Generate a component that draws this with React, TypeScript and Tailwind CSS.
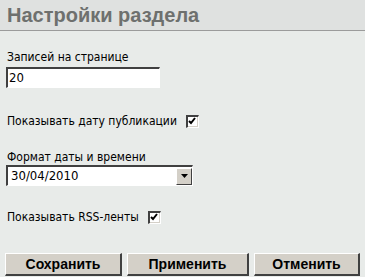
import React from "react";

const Check = () => (
  <span className="inline-flex w-[13px] h-[13px] bg-white border-t-2 border-l-2 border-t-[#404040] border-l-[#404040] border-b border-r border-b-[#ffffff] border-r-[#ffffff] shadow-[inset_-1px_-1px_0_#d4d0c8] items-center justify-center">
    <svg width="9" height="9" viewBox="0 0 9 9">
      <path d="M1 4 L3 6 L7 1" stroke="#000" strokeWidth="2" fill="none" />
    </svg>
  </span>
);

export default function App() {
  const font = { fontFamily: "Tahoma, 'DejaVu Sans Condensed', 'DejaVu Sans', sans-serif" };
  return (
    <div className="w-[365px] h-[277px] bg-[#e8ebe9] overflow-hidden" style={font}>
      <div className="h-[31px] bg-[#dfe1e0] border-b border-[#9b9b9b] pl-[7px] flex items-center">
        <span className="text-[20px] font-bold text-[#6e706e] leading-none" style={{ fontFamily: "'Liberation Sans', Arial, sans-serif" }}>
          Настройки раздела
        </span>
      </div>
      <div className="pl-[6px] pt-[19px] text-[12px] text-black">
        <div className="pl-[1px] leading-[14px]">Записей на странице</div>
        <div className="mt-[3px] w-[154px] h-[21px] bg-white border-t-2 border-l-2 border-t-[#404040] border-l-[#404040] border-b border-r border-b-white border-r-white flex items-center pl-[1px] text-[13px]">
          20
        </div>
        <div className="mt-[26px] flex items-center gap-[9px] pl-[1px] h-[14px]">
          <span>Показывать дату публикации</span>
          <Check />
        </div>
        <div className="mt-[22px] pl-[1px] leading-[14px]">Формат даты и времени</div>
        <div className="mt-[1px] w-[187px] h-[21px] bg-white border-t-2 border-l-2 border-t-[#404040] border-l-[#404040] border-b border-r border-b-white border-r-white flex items-center">
          <span className="flex-1 pl-[3px] text-[13px]">30/04/2010</span>
          <span className="w-[16px] h-[17px] bg-[#d4d0c8] border border-t-white border-l-white border-b-[#404040] border-r-[#404040] flex items-center justify-center">
            <svg width="7" height="4" viewBox="0 0 7 4"><path d="M0 0 H7 L3.5 4 Z" fill="#000" /></svg>
          </span>
        </div>
        <div className="mt-[24px] flex items-center gap-[9px] pl-[1px] h-[14px]">
          <span>Показывать RSS-ленты</span>
          <Check />
        </div>
        <div className="mt-[29px] flex gap-[5px] -ml-[1px]">
          {[
            ["Сохранить", "w-[117px]"],
            ["Применить", "w-[122px]"],
            ["Отменить", "w-[106px]"],
          ].map(([t, w]) => (
            <button
              key={t}
              className={`${w} h-[23px] bg-[#d4d0c8] border-t border-l border-t-white border-l-white border-b-2 border-r-2 border-b-[#404040] border-r-[#404040] text-[14px] font-bold text-black flex items-center justify-center`}
              style={{ fontFamily: "'Liberation Sans', Arial, sans-serif" }}
            >
              {t}
            </button>
          ))}
        </div>
      </div>
    </div>
  );
}
